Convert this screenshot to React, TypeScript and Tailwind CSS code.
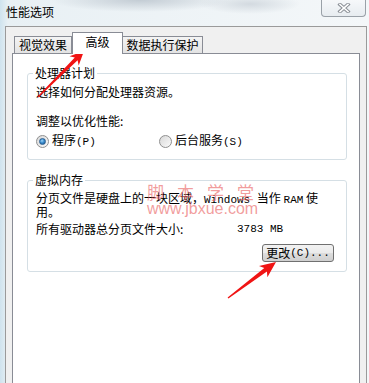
import React from 'react';

const mono = "font-['Liberation_Mono'] text-[11px]";

const Radio = ({ checked }: { checked?: boolean }) => (
  <span className="w-[13px] h-[13px] rounded-full border border-[#8f8f8f] bg-gradient-to-br from-[#d8d8d8] to-[#fbfbfb] flex items-center justify-center shrink-0">
    {checked && (
      <span className="w-[7px] h-[7px] rounded-full bg-[radial-gradient(circle_at_40%_35%,#9fd4f7_0%,#3c8fd0_45%,#174f86_100%)] border border-[#2a5f92]" />
    )}
  </span>
);

const CloseGlyph = () => (
  <svg width="14" height="10" viewBox="0 0 14 10">
    <path d="M3 1.5 L11 8.5 M11 1.5 L3 8.5" stroke="#8a8f96" strokeWidth="3.6" strokeLinecap="square" fill="none" />
    <path d="M3 1.5 L11 8.5 M11 1.5 L3 8.5" stroke="#ffffff" strokeWidth="1.6" strokeLinecap="square" fill="none" />
  </svg>
);

export default function App() {
  return (
    <div className="relative w-[369px] h-[383px] overflow-hidden font-['Noto_Sans_CJK_SC',sans-serif] text-[12px] text-black bg-[radial-gradient(ellipse_90px_12px_at_140px_0px,#c3ccd4,transparent),radial-gradient(ellipse_50px_10px_at_250px_4px,#d3dae0,transparent),linear-gradient(90deg,#cfe3ee_0px,#e8f0f4_8px,#f4f7f9_100%)]">
      {/* Title bar */}
      <div className="h-[26px] flex items-start justify-between">
        <div className="pl-[6px] pt-[5px] leading-[14px]">性能选项</div>
        <div className="mr-[3px] w-[45px] h-[17px] rounded-b-[4px] border border-t-0 border-[#9aa1a8] bg-gradient-to-b from-[#f6f8fa] to-[#e7ecf0] flex items-center justify-center">
          <CloseGlyph />
        </div>
      </div>

      {/* Client area */}
      <div className="ml-[5px] w-[362px] h-[400px] bg-[#f0f0f0] border border-[#9a9a9a] pt-[5px]">
        {/* Tabs */}
        <div className="relative z-10 ml-[8px] h-[22px] -mb-[1px] flex items-end">
          <div className="w-[58px] h-[17px] mb-[1px] border border-b-0 border-[#898c95] bg-gradient-to-b from-[#f4f4f4] to-[#e3e3e3] flex items-center justify-center leading-[14px]">
            视觉效果
          </div>
          <div className="w-[51px] h-[22px] border border-b-0 border-[#898c95] bg-white flex items-start justify-center pt-[2px] leading-[14px]">
            高级
          </div>
          <div className="w-[80px] h-[17px] mb-[1px] border border-b-0 border-l-0 border-[#898c95] bg-gradient-to-b from-[#f4f4f4] to-[#e3e3e3] flex items-center justify-center leading-[14px]">
            数据执行保护
          </div>
        </div>

        {/* Tab panel */}
        <div className="mx-[6px] h-[360px] border border-[#898c95] bg-white pt-[12px]">
          <fieldset className="ml-[14px] mr-[12px] border border-[#d5dfe5] rounded-[3px] pl-[8px] pb-[11px]">
            <legend className="ml-[-3px] px-[2px] leading-[14px]">处理器计划</legend>
            <p className="mt-[5px] leading-[14px]">选择如何分配处理器资源。</p>
            <p className="mt-[15px] leading-[14px]">调整以优化性能:</p>
            <div className="mt-[6px] h-[14px] flex items-center leading-[14px]">
              <label className="w-[123px] flex items-center gap-[3px]">
                <Radio checked />
                <span>程序<span className={mono}>(P)</span></span>
              </label>
              <label className="flex items-center gap-[3px]">
                <Radio />
                <span>后台服务<span className={mono}>(S)</span></span>
              </label>
            </div>
          </fieldset>

          <fieldset className="mt-[13px] ml-[14px] mr-[12px] border border-[#d5dfe5] rounded-[3px] pl-[8px] pr-[12px] pb-[9px]">
            <legend className="ml-[-3px] px-[2px] leading-[14px]">虚拟内存</legend>
            <div className="mt-[5px] leading-[12px]">
              <div className="whitespace-nowrap">
                分页文件是硬盘上的一块区域，<span className={mono}>Windows </span>当作 <span className={mono}>RAM</span> 使
              </div>
              <div>用。</div>
            </div>
            <div className="mt-[4px] flex leading-[14px]">
              <span className="w-[201px]">所有驱动器总分页文件大小:</span>
              <span className={mono}>3783 MB</span>
            </div>
            <div className="mt-[8px] flex justify-end">
              <button className="w-[72px] h-[18px] rounded-[3px] border border-[#707070] bg-[linear-gradient(180deg,#f2f2f2_0%,#ebebeb_48%,#dddddd_52%,#cfcfcf_100%)] flex items-center justify-center leading-[14px]">
                更改<span className={mono}>(C)...</span>
              </button>
            </div>
          </fieldset>
        </div>
      </div>

      {/* Watermark */}
      <div className="absolute left-[147px] top-[183px] pointer-events-none text-[rgba(232,90,90,0.6)]">
        <div className="text-[17px] leading-[18px] tracking-[13px]">脚本学堂</div>
        <div className="font-['Liberation_Sans'] text-[16px] leading-[18px] -mt-[1px]">www.jbxue.com</div>
      </div>

      {/* Red arrows */}
      <svg className="absolute inset-0 pointer-events-none" width="369" height="383" viewBox="0 0 369 383">
        <polygon
          points="38.4,97.4 77.6,60.2 78.7,65.5 84,51 69.5,56.3 74.8,57.4 37.6,96.6"
          fill="#f01414"
        />
        <polygon
          points="228.4,298.6 266.9,271.6 267.4,277.2 276,262 259,266 264.3,268 227.6,297.4"
          fill="#f01414"
        />
      </svg>
    </div>
  );
}
